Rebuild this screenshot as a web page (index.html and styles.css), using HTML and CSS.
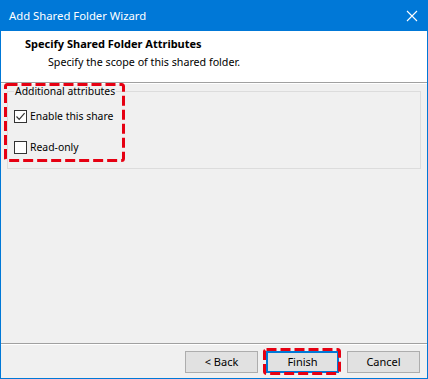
FILE: index.html
```html
<!DOCTYPE html>
<html>
<head>
<meta charset="utf-8">
<link rel="stylesheet" href="styles.css">
</head>
<body>
<div class="window">
  <div class="titlebar">
    <span class="title">Add Shared Folder Wizard</span>
    <svg class="close" width="12" height="12" viewBox="0 0 12 12"><path d="M1 1L11 11M11 1L1 11" stroke="#fff" stroke-width="1.1" fill="none"/></svg>
  </div>
  <div class="header">
    <div class="h-title">Specify Shared Folder Attributes</div>
    <div class="h-sub">Specify the scope of this shared folder.</div>
  </div>
  <div class="content">
    <fieldset class="group">
      <legend class="legend">Additional attributes</legend>
      <label class="check">
        <span class="box"><svg width="11" height="11" viewBox="0 0 11 11"><path d="M1.5 5.5L4.2 8.3L9.6 2.2" stroke="#333" stroke-width="1.2" fill="none"/></svg></span>
        <span>Enable this share</span>
      </label>
      <label class="check">
        <span class="box"></span>
        <span>Read-only</span>
      </label>
    </fieldset>
  </div>
  <div class="footer">
    <button class="btn">&lt; Back</button>
    <button class="btn primary">Finish</button>
    <button class="btn">Cancel</button>
  </div>
  <svg class="annot" width="428" height="379" viewBox="0 0 428 379">
    <rect x="5.5" y="84.5" width="118" height="76" rx="2" fill="none" stroke="#e60012" stroke-width="3" stroke-dasharray="10 4"/>
    <rect x="264.5" y="349.5" width="75" height="24" rx="2" fill="none" stroke="#e60012" stroke-width="3" stroke-dasharray="10 4"/>
  </svg>
</div>
</body>
</html>
```

FILE: styles.css
```css
html, body {
  margin: 0;
  padding: 0;
  background: #fff;
}
body {
  font-family: "Noto Sans", "Liberation Sans", sans-serif;
  font-size: 11px;
  color: #000;
}
.window {
  position: relative;
  width: 428px;
  height: 379px;
  box-sizing: border-box;
  border-left: 1px solid #0078d7;
  border-right: 1px solid #0078d7;
  border-bottom: 1px solid #0078d7;
  display: flex;
  flex-direction: column;
  background: #f0f0f0;
}
.titlebar {
  height: 31px;
  margin: 0 -1px;
  background: #0078d7;
  color: #fff;
  display: flex;
  align-items: center;
  justify-content: space-between;
  padding: 0 10px 0 9px;
  flex: none;
}
.title {
  font-size: 11.3px;
  line-height: 16px;
}
.close {
  display: block;
}
.header {
  height: 52px;
  background: #fff;
  border-bottom: 1px solid #a0a0a0;
  box-shadow: 0 1px 0 #fff;
  box-sizing: border-box;
  padding-top: 5px;
  flex: none;
}
.h-title {
  font-weight: bold;
  padding-left: 24px;
  line-height: 16px;
}
.h-sub {
  padding-left: 47px;
  line-height: 16px;
  margin-top: 2px;
  font-size: 10.7px;
}
.content {
  flex: 1;
  padding: 1px 6px 0 6px;
  border-bottom: 1px solid #a0a0a0;
  margin-top: 1px;
}
.group {
  margin: 0;
  border: 1px solid #dcdcdc;
  padding: 10px 0 13px 6px;
  display: flex;
  flex-direction: column;
  gap: 15px;
  font-size: 10.4px;
}
.legend {
  padding: 0 1px;
  line-height: 13px;
  margin-left: 0;
  font-size: 10.4px;
}
.check {
  display: flex;
  align-items: center;
  height: 16px;
  gap: 3px;
}
.box {
  width: 11px;
  height: 11px;
  border: 1px solid #333;
  background: #fff;
  display: flex;
  align-items: center;
  justify-content: center;
}
.box svg {
  display: block;
}
.footer {
  height: 34px;
  flex: none;
  box-sizing: border-box;
  border-top: 1px solid #fff;
  display: flex;
  justify-content: flex-end;
  align-items: flex-start;
  gap: 8px;
  padding: 6px 7px 0 0;
}
.btn {
  width: 73px;
  height: 22px;
  box-sizing: border-box;
  background: #e1e1e1;
  border: 1px solid #adadad;
  font-family: "Noto Sans", "Liberation Sans", sans-serif;
  font-size: 11px;
  color: #000;
  padding: 0;
  line-height: 18px;
}
.btn.primary {
  border: 2px solid #0078d7;
}
.annot {
  position: absolute;
  left: -1px;
  top: 0;
  pointer-events: none;
}
```
